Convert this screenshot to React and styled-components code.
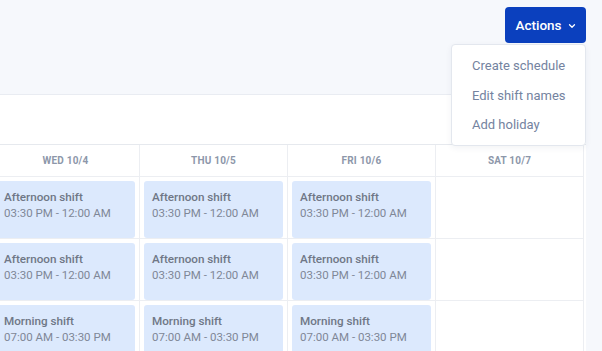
import React from "react";
import styled, { createGlobalStyle } from "styled-components";

const GlobalStyle = createGlobalStyle`
  html, body {
    margin: 0;
    padding: 0;
    background: #f6f8fc;
    font-family: Roboto, "Open Sans", Arial, sans-serif;
    overflow: hidden;
  }
`;

const days = ["WED 10/4", "THU 10/5", "FRI 10/6", "SAT 10/7"];

const rows = [
  { name: "Afternoon shift", time: "03:30 PM - 12:00 AM", days: [0, 1, 2] },
  { name: "Afternoon shift", time: "03:30 PM - 12:00 AM", days: [0, 1, 2] },
  { name: "Morning shift", time: "07:00 AM - 03:30 PM", days: [0, 1, 2] },
];

const App = () => {
  return (
    <>
      <GlobalStyle />
      <Page>
        <TopBar>
          <ActionsButton>
            Actions
            <svg width="10" height="10" viewBox="0 0 24 24" fill="none" stroke="currentColor" strokeWidth="3" strokeLinecap="round" strokeLinejoin="round">
              <polyline points="6 9 12 15 18 9" />
            </svg>
          </ActionsButton>
          <Menu>
            <MenuItem>Create schedule</MenuItem>
            <MenuItem>Edit shift names</MenuItem>
            <MenuItem>Add holiday</MenuItem>
          </Menu>
        </TopBar>
        <Panel>
          <Toolbar />
          <Grid>
            {days.map((d) => (
              <HeadCell key={d}>{d}</HeadCell>
            ))}
            {rows.map((row, r) =>
              days.map((d, i) => (
                <Cell key={r + d}>
                  {row.days.includes(i) && (
                    <Shift>
                      <ShiftName>{row.name}</ShiftName>
                      <ShiftTime>{row.time}</ShiftTime>
                    </Shift>
                  )}
                </Cell>
              ))
            )}
          </Grid>
        </Panel>
      </Page>
    </>
  );
};

const Page = styled.div`
  width: 602px;
  height: 351px;
  overflow: hidden;
  position: relative;
`;

const TopBar = styled.div`
  height: 94px;
  display: flex;
  justify-content: flex-end;
  align-items: flex-start;
  padding: 7px 16px 0 0;
  box-sizing: border-box;
  position: relative;
`;

const ActionsButton = styled.button`
  height: 36px;
  width: 81px;
  border: none;
  border-radius: 4px;
  background: #0b40be;
  color: #fff;
  font-family: inherit;
  font-size: 13.5px;
  font-weight: 500;
  display: flex;
  align-items: center;
  justify-content: center;
  gap: 5px;
  padding: 0 0 0 1px;
  svg {
    margin-top: 1px;
  }
`;

const Menu = styled.div`
  position: absolute;
  top: 44px;
  right: 16px;
  width: 135px;
  background: #fff;
  border: 1px solid #e3e7ee;
  border-radius: 4px;
  box-shadow: 0 2px 6px rgba(30, 50, 90, 0.06);
  padding: 6px 0 5px;
  box-sizing: border-box;
  z-index: 5;
`;

const MenuItem = styled.div`
  height: 29.5px;
  line-height: 29.5px;
  padding-left: 20px;
  font-size: 13px;
  color: #7483a0;
`;

const Panel = styled.div`
  margin-left: -8px;
  width: 594px;
  background: #fff;
  border-top: 1px solid #e9ecf2;
  height: 257px;
`;

const Toolbar = styled.div`
  height: 49px;
  border-bottom: 1px solid #e6e9ee;
`;

const Grid = styled.div`
  display: grid;
  grid-template-columns: repeat(4, 148px);
`;

const HeadCell = styled.div`
  height: 32px;
  box-sizing: border-box;
  display: flex;
  align-items: center;
  justify-content: center;
  font-size: 10px;
  font-weight: 700;
  color: #8d97aa;
  letter-spacing: 0.2px;
  border-right: 1px solid #eceef2;
  border-bottom: 1px solid #eceef2;
`;

const Cell = styled.div`
  height: 62px;
  padding: 4px 4px 0;
  box-sizing: border-box;
  border-right: 1px solid #eceef2;
  border-bottom: 1px solid #eceef2;
`;

const Shift = styled.div`
  height: 57px;
  background: #dce9fd;
  border-radius: 3px;
  padding: 8px 8px;
  box-sizing: border-box;
`;

const ShiftName = styled.div`
  font-size: 11.7px;
  font-weight: 500;
  color: #6f7786;
  line-height: 16px;
`;

const ShiftTime = styled.div`
  font-size: 11.5px;
  color: #7f8797;
  line-height: 16px;
`;

export default App;
